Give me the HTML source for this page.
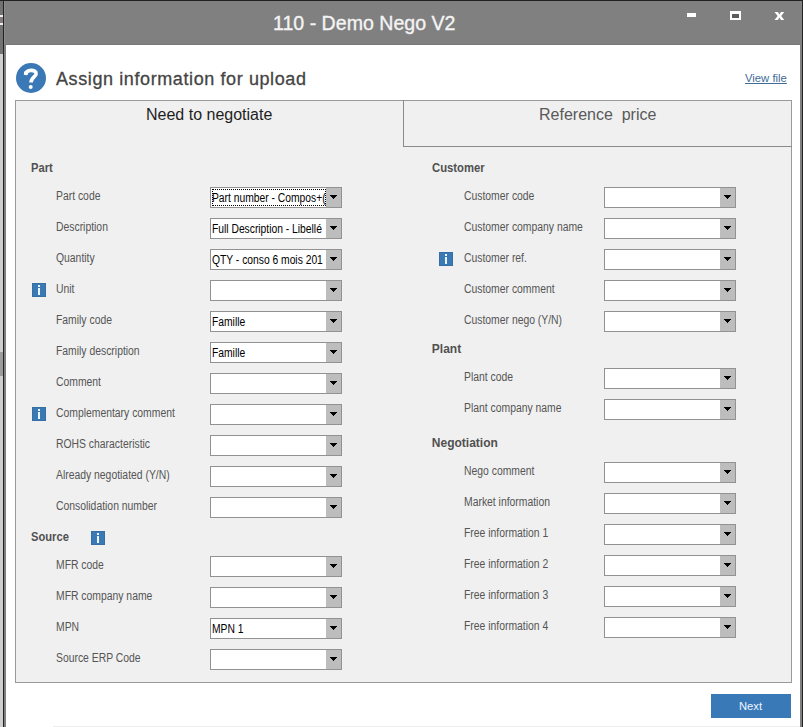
<!DOCTYPE html>
<html><head><meta charset="utf-8">
<style>
*{margin:0;padding:0;box-sizing:border-box}
html,body{width:803px;height:727px;overflow:hidden;background:#fff;font-family:"Liberation Sans",sans-serif}
.a{position:absolute}
.lbl{position:absolute;font-size:12px;color:#555;white-space:pre;transform-origin:0 0;transform:scaleX(0.865);line-height:14px}
.hdr{position:absolute;font-size:12px;font-weight:bold;color:#505050;white-space:pre;transform-origin:0 0;line-height:14px}
.cb{position:absolute;width:132px;height:21px;border:1px solid #929292;background:#fff;overflow:hidden}
.cb .btn{position:absolute;right:0;top:0;width:15px;height:19px;background:#bdbdbd}
.cb .btn:after{content:"";position:absolute;left:4px;top:7px;width:7px;height:4px;background:linear-gradient(#000,#000) 0 0/7px 1px no-repeat,linear-gradient(#000,#000) 1px 1px/5px 1px no-repeat,linear-gradient(#000,#000) 2px 2px/3px 1px no-repeat,linear-gradient(#000,#000) 3px 3px/1px 1px no-repeat}
.cb .t{position:absolute;left:1.3px;top:2.8px;font-size:12px;color:#000;white-space:pre;transform-origin:0 0;transform:scaleX(0.858);line-height:14px}
.cb .foc{position:absolute;left:1px;top:1px;width:114px;height:17px;border:1px dotted #000}
.info{position:absolute;width:14px;height:14px;background:#3b79b5;box-shadow:inset 0 0 0 1px #356fa5}
.info:before{content:"";position:absolute;left:6px;top:2px;width:2px;height:2px;background:#eaf6ff}
.info:after{content:"";position:absolute;left:6px;top:5px;width:2px;height:7px;background:#eaf6ff}
</style></head><body>
<div class="a" style="left:0;top:0;width:3px;height:727px;background:#cfcfcf"></div>
<div class="a" style="left:0;top:0;width:3px;height:54px;background:#727272"></div>
<div class="a" style="left:0;top:15px;width:3px;height:10px;background:#f0f0f0"></div>
<div class="a" style="left:0;top:17px;width:3px;height:6px;background:#857a80"></div>
<div class="a" style="left:0;top:352px;width:3px;height:24px;background:#9c9c9c"></div>
<div class="a" style="left:3px;top:0;width:1px;height:727px;background:#222"></div>
<div class="a" style="left:0;top:0;width:803px;height:1px;background:#222"></div>
<div class="a" style="left:802px;top:0;width:1px;height:727px;background:#222"></div>
<div class="a" style="left:4px;top:1px;width:798px;height:726px;background:#808080"></div>
<div class="a" style="left:6px;top:45px;width:794px;height:682px;background:#fff"></div>
<div class="a" style="left:6px;top:44px;width:794px;height:1px;background:#787878"></div>
<div class="a" style="left:4px;top:1px;width:1px;height:43px;background:#8c8c8c"></div>
<div class="a" style="left:53px;top:726px;width:747px;height:1px;background:#ededed"></div>
<div class="a" style="left:272.6px;top:10.70px;font-size:20.5px;line-height:24px;color:#f4f4f4;white-space:pre;transform-origin:0 0;transform:scaleX(.955);-webkit-text-stroke:.35px #f4f4f4">110 - Demo Nego V2</div>
<div class="a" style="left:687px;top:13px;width:9px;height:4px;background:#fff"></div>
<div class="a" style="left:730px;top:11px;width:11px;height:9px;border:2px solid #fff;border-top-width:3px;background:#5c5c5c"></div>
<svg class="a" style="left:770px;top:8px" width="20" height="16" viewBox="770 8 20 16"><path d="M774.5 12H777.9L779.4 14.5L780.9 12H784.3L781.2 16L784.3 20H780.9L779.4 17.5L777.9 20H774.5L777.6 16Z" fill="#fff"/></svg>
<svg class="a" style="left:16px;top:63px" width="30" height="30" viewBox="16 63 30 30"><circle cx="31" cy="78" r="15" fill="#3a78b6"/><path d="M25.6 74.5 C25.2 69.5 36.6 68.8 36.1 73.8 C35.9 76.8 31 77.5 31 82.6" stroke="#fff" stroke-width="3.6" fill="none"/><circle cx="26.1" cy="73.1" r="2.2" fill="#fff"/><circle cx="30.7" cy="87.1" r="2" fill="#fff"/></svg>
<div class="a" style="left:56px;top:68.16px;font-size:18px;line-height:22px;color:#444;white-space:pre;letter-spacing:.6px;-webkit-text-stroke:.3px #444">Assign information for upload</div>
<div class="a" style="left:745px;top:71.08px;font-size:11.3px;line-height:14px;color:#416c98;white-space:pre;text-decoration:underline">View file</div>
<div class="a" style="left:15px;top:100px;width:777px;height:583px;border:1px solid #9a9a9a;background:#f0f0f0"></div>
<div class="a" style="left:403px;top:100px;width:1px;height:47px;background:#8a8a8a"></div>
<div class="a" style="left:403px;top:146px;width:389px;height:1px;background:#8a8a8a"></div>
<div class="a" style="left:146px;top:105.16px;font-size:16px;line-height:19px;color:#1e1e1e;white-space:pre">Need to negotiate</div>
<div class="a" style="left:539px;top:105.16px;font-size:16px;line-height:19px;color:#595959;white-space:pre">Reference  price</div>
<div class="hdr" style="left:31.2px;top:160.84px;transform:scaleX(0.93)">Part</div>
<div class="hdr" style="left:431.8px;top:160.84px;transform:scaleX(0.94)">Customer</div>
<div class="hdr" style="left:431.8px;top:341.84px;transform:scaleX(1.0)">Plant</div>
<div class="hdr" style="left:431.8px;top:436.04px;transform:scaleX(1.0)">Negotiation</div>
<div class="hdr" style="left:31px;top:529.84px;transform:scaleX(0.93)">Source</div>
<div class="info" style="left:91px;top:531px"></div>
<div class="lbl" style="left:56px;top:188.84px">Part code</div><div class="cb" style="left:210px;top:187px"><div class="t">Part number - Compos+(</div><div class="btn"></div><div class="foc"></div></div>
<div class="lbl" style="left:56px;top:219.84px">Description</div><div class="cb" style="left:210px;top:218px"><div class="t">Full Description - Libellé</div><div class="btn"></div></div>
<div class="lbl" style="left:56px;top:250.84px">Quantity</div><div class="cb" style="left:210px;top:249px"><div class="t">QTY - conso 6 mois 201</div><div class="btn"></div></div>
<div class="info" style="left:32px;top:283px"></div><div class="lbl" style="left:56px;top:281.84px">Unit</div><div class="cb" style="left:210px;top:280px"><div class="btn"></div></div>
<div class="lbl" style="left:56px;top:312.84px">Family code</div><div class="cb" style="left:210px;top:311px"><div class="t">Famille</div><div class="btn"></div></div>
<div class="lbl" style="left:56px;top:343.84px">Family description</div><div class="cb" style="left:210px;top:342px"><div class="t">Famille</div><div class="btn"></div></div>
<div class="lbl" style="left:56px;top:374.84px">Comment</div><div class="cb" style="left:210px;top:373px"><div class="btn"></div></div>
<div class="info" style="left:32px;top:407px"></div><div class="lbl" style="left:56px;top:405.84px">Complementary comment</div><div class="cb" style="left:210px;top:404px"><div class="btn"></div></div>
<div class="lbl" style="left:56px;top:436.84px">ROHS characteristic</div><div class="cb" style="left:210px;top:435px"><div class="btn"></div></div>
<div class="lbl" style="left:56px;top:467.84px">Already negotiated (Y/N)</div><div class="cb" style="left:210px;top:466px"><div class="btn"></div></div>
<div class="lbl" style="left:56px;top:498.84px">Consolidation number</div><div class="cb" style="left:210px;top:497px"><div class="btn"></div></div>
<div class="lbl" style="left:56px;top:557.84px">MFR code</div><div class="cb" style="left:210px;top:556px"><div class="btn"></div></div>
<div class="lbl" style="left:56px;top:588.84px">MFR company name</div><div class="cb" style="left:210px;top:587px"><div class="btn"></div></div>
<div class="lbl" style="left:56px;top:619.84px">MPN</div><div class="cb" style="left:210px;top:618px"><div class="t">MPN 1</div><div class="btn"></div></div>
<div class="lbl" style="left:56px;top:650.84px">Source ERP Code</div><div class="cb" style="left:210px;top:649px"><div class="btn"></div></div>
<div class="lbl" style="left:463.8px;top:188.84px">Customer code</div><div class="cb" style="left:604px;top:187px"><div class="btn"></div></div>
<div class="lbl" style="left:463.8px;top:219.84px">Customer company name</div><div class="cb" style="left:604px;top:218px"><div class="btn"></div></div>
<div class="info" style="left:439px;top:252px"></div><div class="lbl" style="left:463.8px;top:250.84px">Customer ref.</div><div class="cb" style="left:604px;top:249px"><div class="btn"></div></div>
<div class="lbl" style="left:463.8px;top:281.84px">Customer comment</div><div class="cb" style="left:604px;top:280px"><div class="btn"></div></div>
<div class="lbl" style="left:463.8px;top:312.84px">Customer nego (Y/N)</div><div class="cb" style="left:604px;top:311px"><div class="btn"></div></div>
<div class="lbl" style="left:463.8px;top:369.84px">Plant code</div><div class="cb" style="left:604px;top:368px"><div class="btn"></div></div>
<div class="lbl" style="left:463.8px;top:400.84px">Plant company name</div><div class="cb" style="left:604px;top:399px"><div class="btn"></div></div>
<div class="lbl" style="left:463.8px;top:463.84px">Nego comment</div><div class="cb" style="left:604px;top:462px"><div class="btn"></div></div>
<div class="lbl" style="left:463.8px;top:494.84px">Market information</div><div class="cb" style="left:604px;top:493px"><div class="btn"></div></div>
<div class="lbl" style="left:463.8px;top:525.84px">Free information 1</div><div class="cb" style="left:604px;top:524px"><div class="btn"></div></div>
<div class="lbl" style="left:463.8px;top:556.84px">Free information 2</div><div class="cb" style="left:604px;top:555px"><div class="btn"></div></div>
<div class="lbl" style="left:463.8px;top:587.84px">Free information 3</div><div class="cb" style="left:604px;top:586px"><div class="btn"></div></div>
<div class="lbl" style="left:463.8px;top:618.84px">Free information 4</div><div class="cb" style="left:604px;top:617px"><div class="btn"></div></div>
<div class="a" style="left:711px;top:694px;width:80px;height:24px;background:#3a79b8"></div>
<div class="a" style="left:739px;top:699.52px;font-size:11.2px;line-height:13px;color:#eef7ff;white-space:pre">Next</div>
</body></html>
